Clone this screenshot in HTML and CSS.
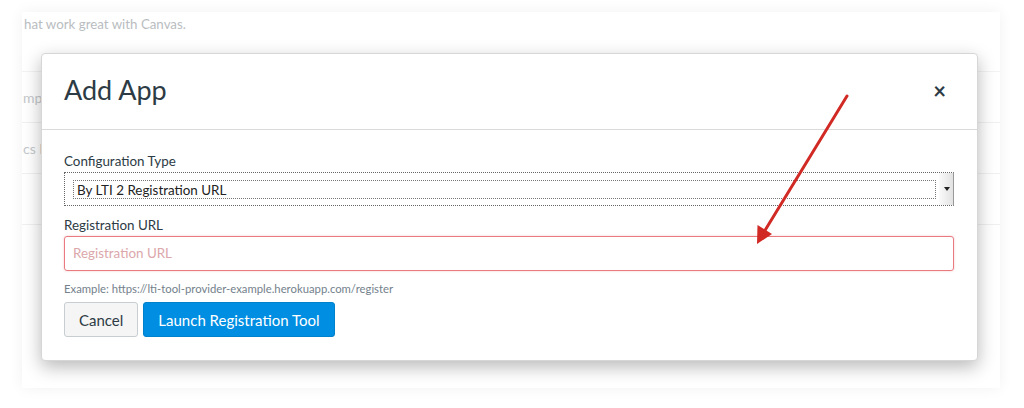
FILE: index.html
```
<!DOCTYPE html>
<html lang="en">
<head>
    <meta charset="UTF-8">
    <title>Add App</title>
    <link rel="stylesheet" href="styles.css">
</head>
<body>
    <div class="page">
        <div class="page-row first"><span>hat work great with Canvas.</span></div>
        <div class="page-row"><span>mples</span></div>
        <div class="page-row"><span>cs Beta</span></div>
        <div class="page-row"></div>
    </div>

    <div class="modal">
        <div class="modal-header">
            <h1>Add App</h1>
            <span class="close">&times;</span>
        </div>
        <div class="modal-body">
            <label>Configuration Type</label>
            <div class="select">
                <div class="select-inner">By LTI 2 Registration URL</div>
                <div class="select-arrow"></div>
            </div>

            <label>Registration URL</label>
            <div class="input error">Registration URL</div>
            <p class="hint">Example: https://lti-tool-provider-example.herokuapp.com/register</p>

            <div class="actions">
                <button class="btn">Cancel</button>
                <button class="btn primary">Launch Registration Tool</button>
            </div>
        </div>
    </div>

    <!-- annotation arrow -->
    <svg class="arrow" width="1024" height="408" viewBox="0 0 1024 408">
        <line x1="847" y1="96" x2="764" y2="232" stroke="#d12a25" stroke-width="3" stroke-linecap="round"/>
        <polygon points="757,244 757.5,225 772,234" fill="#d12a25"/>
    </svg>
</body>
</html>
```

FILE: styles.css
```
body {
    margin: 0;
    width: 1024px;
    height: 408px;
    overflow: hidden;
    background: #fff;
    font-family: Lato, "Open Sans", sans-serif;
    color: #2d3b45;
    position: relative;
}
.page {
    margin: 12px 24px 0 22px;
    height: 376px;
    background: #fff;
    box-shadow: 0 0 14px rgba(0,0,0,0.06);
    overflow: hidden;
}
.page-row {
    height: 50px;
    border-bottom: 1px solid #f0f0f0;
    font-size: 14px;
    color: #c4c8cb;
    display: flex;
    align-items: center;
    padding-left: 1px;
}
.page-row.first {
    height: 60px;
    align-items: flex-start;
    padding: 4px 0 0 2px;
    box-sizing: border-box;
    border-bottom-color: #f3f3f3;
}
.page-row.first span {
    font-size: 13.3px;
    color: #b9bdc1;
}

.modal {
    position: absolute;
    left: 41px;
    top: 53px;
    width: 935px;
    height: 306px;
    background: #fff;
    border: 1px solid #d6d6d6;
    border-radius: 4px;
    box-shadow: 0 6px 18px rgba(0,0,0,0.28);
}
.modal-header {
    height: 75px;
    border-bottom: 1px solid #dadada;
    display: flex;
    align-items: center;
    justify-content: space-between;
    padding: 0 30px 0 22px;
}
.modal-header h1 {
    margin: 0;
    font-weight: normal;
    font-size: 27px;
    padding-bottom: 4px;
}
.close {
    font-size: 22px;
    font-weight: bold;
    color: #2d3b45;
    margin-top: -3px;
    margin-right: 1px;
}
.modal-body {
    padding: 22px 22px 0 22px;
}
label {
    display: block;
    font-size: 13.4px;
    line-height: 18px;
    margin-bottom: 2px;
}
.select {
    height: 34px;
    box-sizing: border-box;
    border: 1px dotted #666;
    border-right: 1px solid #999;
    display: flex;
    align-items: center;
    padding: 0 0 0 8px;
    margin-bottom: 10px;
    width: 890px;
}
.select-inner {
    flex: 1;
    border: 1px dotted #777;
    height: 19px;
    line-height: 18px;
    box-sizing: border-box;
    padding-left: 3px;
    font-size: 13.4px;
    color: #222;
}
.select-arrow {
    width: 14px;
    height: 32px;
    margin-left: 3px;
    background: linear-gradient(to right, #fafafa, #e2e2e2);
    position: relative;
}
.select-arrow::after {
    content: "";
    position: absolute;
    left: 5px;
    top: 14px;
    border-left: 3px solid transparent;
    border-right: 3px solid transparent;
    border-top: 4px solid #222;
}
.input {
    height: 35px;
    box-sizing: border-box;
    border: 1px solid #e97a80;
    border-radius: 3px;
    box-shadow: 0 0 2px rgba(233,122,128,0.5);
    padding: 0 8px;
    line-height: 33px;
    font-size: 13.4px;
    color: #dba7ab;
    width: 890px;
}
.hint {
    margin: 11px 0 6px 0;
    font-size: 11.3px;
    color: #73818c;
    line-height: 14px;
}
.actions {
    display: flex;
    gap: 5px;
}
.btn {
    height: 35px;
    padding: 0 14px;
    font-family: Lato, "Open Sans", sans-serif;
    font-size: 15px;
    border-radius: 3px;
    border: 1px solid #c7cdd1;
    background: #f5f5f5;
    color: #2d3b45;
}
.btn.primary {
    background: #008ee2;
    border-color: #0081cc;
    color: #fff;
}
.arrow {
    position: absolute;
    left: 0;
    top: 0;
}
```
